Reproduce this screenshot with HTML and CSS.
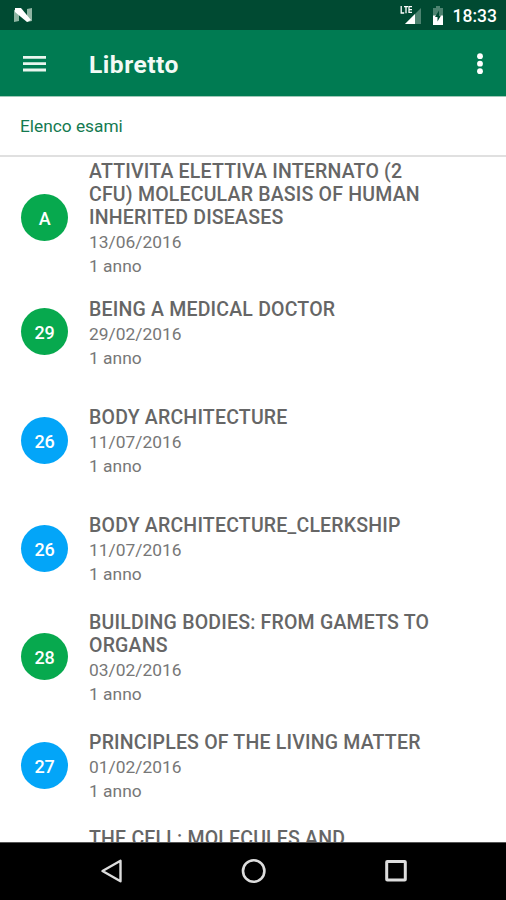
FILE: index.html
```html
<!DOCTYPE html>
<html lang="it">
<head>
<meta charset="utf-8">
<title>Libretto</title>
<link rel="stylesheet" href="styles.css">
</head>
<body>
<div class="screen">
  <div class="status">
    <svg class="logo" width="20" height="16" viewBox="0 0 20 16"><path fill="#8fb5a3" d="M1 3l5-1v12l-5 1zM14 2l5-1v13l-5 1z"/><path fill="#fff" d="M2 1h6l10 12-4 2L2 5z"/></svg>
    <div class="tray">
      <svg width="22" height="20" viewBox="0 0 22 20"><path fill="#4d8370" d="M21 3v16H5z"/><path fill="#fff" d="M15 9v10H5z"/><path fill="none" stroke="#fff" stroke-width="1.3" d="M1.2 1v7h3M4 1.7h4M6 1.700v6.500M12 1.700H9v5.700h3M9 4.600h3"/></svg>
      <svg class="battery" width="12" height="19" viewBox="0 0 12 19"><path fill="#4d8370" d="M1 2h3V0h4v2h3v17H1z"/><path fill="#fff" d="M1 9.500h10V19H1z"/><path fill="#004a32" d="M7 4.500l-4 6.500h2.500v4.500l3.500-6H7z"/></svg>
      <span class="clock">18:33</span>
    </div>
  </div>
  <header class="bar">
    <svg class="menu" width="24" height="16" viewBox="0 0 24 16"><path fill="#e9f5ee" d="M0 0h23v2.800H0zM0 6.300h23v2.800H0zM0 12.600h23v2.800H0z"/></svg>
    <h1>Libretto</h1>
    <svg class="more" width="6" height="22" viewBox="0 0 6 22"><g fill="#fff"><circle cx="3" cy="3.200" r="2.900"/><circle cx="3" cy="10.700" r="2.900"/><circle cx="3" cy="18.200" r="2.900"/></g></svg>
  </header>
  <div class="section">Elenco esami</div>
  <main class="list">
    <div class="row tall"><span class="grade green">A</span><div class="info"><h2>ATTIVITA ELETTIVA INTERNATO (2<br>CFU) MOLECULAR BASIS OF HUMAN<br>INHERITED DISEASES</h2><p>13/06/2016</p><p>1 anno</p></div></div>
    <div class="row"><span class="grade green">29</span><div class="info"><h2>BEING A MEDICAL DOCTOR</h2><p>29/02/2016</p><p>1 anno</p></div></div>
    <div class="row"><span class="grade blue">26</span><div class="info"><h2>BODY ARCHITECTURE</h2><p>11/07/2016</p><p>1 anno</p></div></div>
    <div class="row"><span class="grade blue">26</span><div class="info"><h2>BODY ARCHITECTURE_CLERKSHIP</h2><p>11/07/2016</p><p>1 anno</p></div></div>
    <div class="row"><span class="grade green">28</span><div class="info"><h2>BUILDING BODIES: FROM GAMETS TO<br>ORGANS</h2><p>03/02/2016</p><p>1 anno</p></div></div>
    <div class="row"><span class="grade blue">27</span><div class="info"><h2>PRINCIPLES OF THE LIVING MATTER</h2><p>01/02/2016</p><p>1 anno</p></div></div>
    <div class="row last"><div class="info"><h2>THE CELL: MOLECULES AND</h2></div></div>
  </main>
  <nav class="nav">
    <svg width="24" height="26" viewBox="0 0 24 26"><path fill="none" stroke="#ddd" stroke-width="2.400" stroke-linejoin="round" d="M20.500 2.800v20.400L2.500 13z"/></svg>
    <svg width="26" height="26" viewBox="0 0 26 26"><circle cx="12.700" cy="13" r="10.700" fill="none" stroke="#ddd" stroke-width="2.600"/></svg>
    <svg width="24" height="26" viewBox="0 0 24 26"><rect x="2.700" y="3.500" width="18.600" height="18.600" rx=".6" fill="none" stroke="#ddd" stroke-width="3"/></svg>
  </nav>
</div>
</body>
</html>
```
FILE: styles.css
```css
* { box-sizing: border-box; margin: 0; padding: 0; }
body { font-family: Roboto, sans-serif; background: #fff; }
svg { display: block; flex: none; }
.screen { width: 506px; height: 900px; display: flex; flex-direction: column; overflow: hidden; }
.status { flex: none; height: 30px; background: #004a32; display: flex; align-items: center; justify-content: space-between; padding: 0 9px 0 13px; }
.tray { display: flex; align-items: center; height: 30px; }
.battery { margin: 0 9px 0 10px; }
.clock { color: #fff; font-size: 17.500px; font-weight: 500; line-height: 30px; padding-top: 2px; }
.bar { flex: none; height: 66px; background: #007b52; display: flex; align-items: center; padding: 2px 23px 0; }
.bar h1 { flex: 1; margin-left: 42px; color: #f3faf6; font-size: 24.600px; font-weight: 700; letter-spacing: .5px; }
.section { flex: none; height: 61px; padding-left: 20px; border-top: 1px solid #9fc9b8; border-bottom: 2px solid #e0e0e0; color: #147a50; font-size: 17.300px; line-height: 58px; }
.list { flex: 1; min-height: 0; overflow: hidden; }
.row { height: 108.35px; display: flex; align-items: center; padding-left: 21px; }
.row.tall { height: 120.500px; }
.row.last { align-items: flex-start; padding: 8px 0 0 89px; }
.grade { flex: none; width: 47px; height: 47px; border-radius: 50%; color: #fff; font-size: 18px; font-weight: 500; line-height: 49px; text-align: center; letter-spacing: -.2px; }
.green { background: #07a94e; }
.blue { background: #03a5f8; }
.info { margin-left: 21px; padding-top: 4px; color: #666; }
.last .info { margin-left: 0; padding-top: 0; }
.info h2 { font-size: 19.500px; font-weight: 500; line-height: 23px; letter-spacing: .2px; white-space: nowrap; margin-bottom: 1px; }
.info p { font-size: 17.400px; line-height: 24px; color: #777; }
.nav { flex: none; height: 58px; background: #000; border-top: 1px solid #555; display: flex; align-items: center; justify-content: space-between; padding: 0 98px 2px 100px; }
```
